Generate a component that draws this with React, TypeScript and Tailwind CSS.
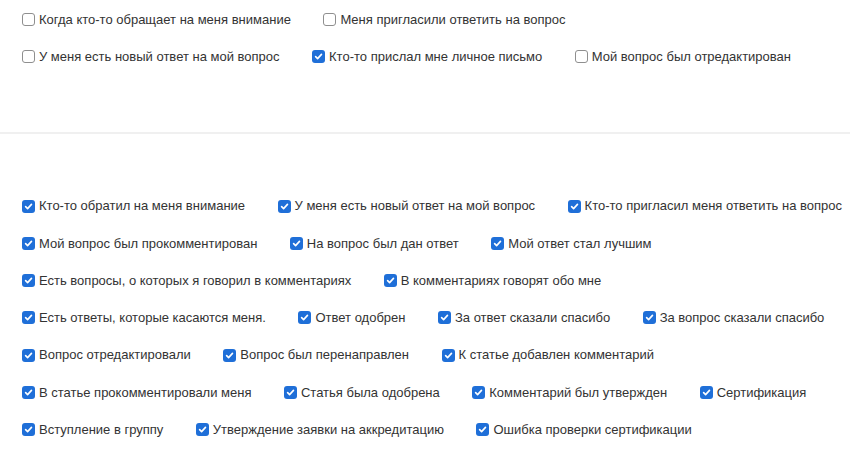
import React from "react";

type Item = { label: string; checked: boolean };

const top: Item[][] = [
  [
    { label: "Когда кто-то обращает на меня внимание", checked: false },
    { label: "Меня пригласили ответить на вопрос", checked: false },
  ],
  [
    { label: "У меня есть новый ответ на мой вопрос", checked: false },
    { label: "Кто-то прислал мне личное письмо", checked: true },
    { label: "Мой вопрос был отредактирован", checked: false },
  ],
];

const bottom: string[][] = [
  ["Кто-то обратил на меня внимание", "У меня есть новый ответ на мой вопрос", "Кто-то пригласил меня ответить на вопрос"],
  ["Мой вопрос был прокомментирован", "На вопрос был дан ответ", "Мой ответ стал лучшим"],
  ["Есть вопросы, о которых я говорил в комментариях", "В комментариях говорят обо мне"],
  ["Есть ответы, которые касаются меня.", "Ответ одобрен", "За ответ сказали спасибо", "За вопрос сказали спасибо"],
  ["Вопрос отредактировали", "Вопрос был перенаправлен", "К статье добавлен комментарий"],
  ["В статье прокомментировали меня", "Статья была одобрена", "Комментарий был утвержден", "Сертификация"],
  ["Вступление в группу", "Утверждение заявки на аккредитацию", "Ошибка проверки сертификации"],
];

function Box({ checked }: { checked: boolean }) {
  if (checked) {
    return (
      <span className="flex h-[13px] w-[13px] shrink-0 items-center justify-center rounded-[3px] bg-[#1f6fd8]">
        <svg width="9" height="9" viewBox="0 0 10 10" fill="none">
          <path d="M1.8 5.2 L4 7.4 L8.3 2.6" stroke="white" strokeWidth="1.8" strokeLinecap="round" strokeLinejoin="round" />
        </svg>
      </span>
    );
  }
  return <span className="h-[13px] w-[13px] shrink-0 rounded-[3px] border border-[#8f8f8f] bg-white" />;
}

function Check({ label, checked }: Item) {
  return (
    <label className="flex items-center gap-[4px] whitespace-nowrap">
      <Box checked={checked} />
      <span>{label}</span>
    </label>
  );
}

export default function App() {
  return (
    <div
      className="h-[454px] w-[850px] overflow-hidden bg-white text-[13px] text-[#333333]"
      style={{ fontFamily: '"Liberation Sans", Arial, sans-serif' }}
    >
      <div className="pt-[1px] pl-[22px]">
        {top.map((row, i) => (
          <div key={i} className="flex h-[37.25px] items-center gap-[32.5px]">
            {row.map((it) => (
              <Check key={it.label} {...it} />
            ))}
          </div>
        ))}
      </div>
      <div className="mt-[56px] h-[2px] w-full bg-[#f0f0f0]" />
      <div className="mt-[54px] pl-[22px]">
        {bottom.map((row, i) => (
          <div key={i} className="flex h-[37.25px] items-center gap-[32.5px]">
            {row.map((l) => (
              <Check key={l} label={l} checked={true} />
            ))}
          </div>
        ))}
      </div>
    </div>
  );
}
